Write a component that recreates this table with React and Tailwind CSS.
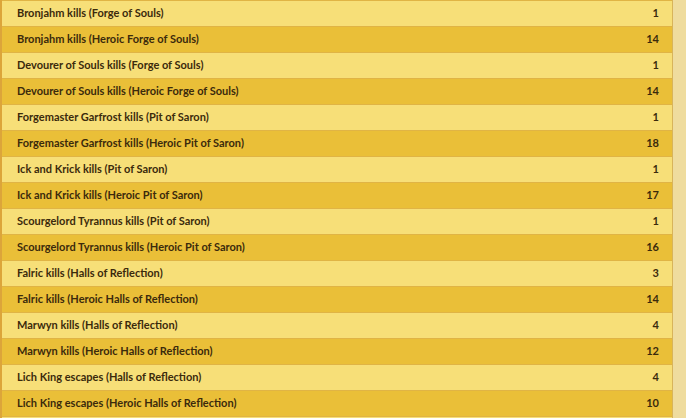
const rows = [
  ["Bronjahm kills (Forge of Souls)", 1],
  ["Bronjahm kills (Heroic Forge of Souls)", 14],
  ["Devourer of Souls kills (Forge of Souls)", 1],
  ["Devourer of Souls kills (Heroic Forge of Souls)", 14],
  ["Forgemaster Garfrost kills (Pit of Saron)", 1],
  ["Forgemaster Garfrost kills (Heroic Pit of Saron)", 18],
  ["Ick and Krick kills (Pit of Saron)", 1],
  ["Ick and Krick kills (Heroic Pit of Saron)", 17],
  ["Scourgelord Tyrannus kills (Pit of Saron)", 1],
  ["Scourgelord Tyrannus kills (Heroic Pit of Saron)", 16],
  ["Falric kills (Halls of Reflection)", 3],
  ["Falric kills (Heroic Halls of Reflection)", 14],
  ["Marwyn kills (Halls of Reflection)", 4],
  ["Marwyn kills (Heroic Halls of Reflection)", 12],
  ["Lich King escapes (Halls of Reflection)", 4],
  ["Lich King escapes (Heroic Halls of Reflection)", 10],
];

export default function App() {
  return (
    <div className="w-[686px] h-[418px] overflow-hidden bg-[#efdc9e] flex">
      <div className="w-[673px] flex flex-col border-l-2 border-[#dca53a] border-r border-r-[#d8b45a]">
        {rows.map(([label, n], i) => (
          <div
            key={i}
            className={
              "h-[26px] shrink-0 flex items-center justify-between pl-[15px] pr-[13px] border-t border-[#e0b445] text-[11px] font-bold text-[#3b2a0c] " +
              (i % 2 === 0 ? "bg-[#f7df78]" : "bg-[#eabf38]")
            }
            style={{ fontFamily: 'Lato, "DejaVu Sans", sans-serif' }}
          >
            <span>{label}</span>
            <span>{n}</span>
          </div>
        ))}
        <div className="flex-1 bg-[#f7df78] border-t border-[#e0b445]" />
      </div>
    </div>
  );
}
